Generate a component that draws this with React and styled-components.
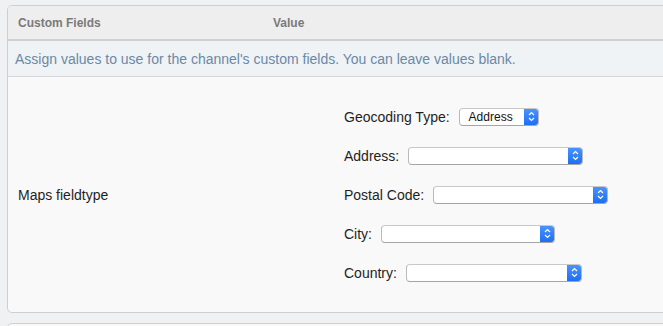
import React from 'react';
import styled, { createGlobalStyle } from 'styled-components';

const GlobalStyle = createGlobalStyle`
  body {
    margin: 0;
    background: #f0f1f2;
    font-family: "Liberation Sans", Arial, sans-serif;
    overflow: hidden;
  }
`;

const Page = styled.div`
  padding: 5px 0 0 7px;
  width: 700px;
`;

const Panel = styled.div`
  border: 1px solid #cfcfcf;
  border-radius: 5px;
  background: #f9f9f9;
  overflow: hidden;
  margin-bottom: 10px;
`;

const HeadRow = styled.div`
  display: grid;
  grid-template-columns: 255px 1fr;
  height: 33px;
  align-items: center;
  background: #eeeeee;
  border-bottom: 2px solid #d0d0d0;
  font-size: 12px;
  font-weight: bold;
  color: #7a7a7a;
`;

const HeadCell = styled.div`
  padding-left: 10px;
`;

const Notice = styled.div`
  height: 35px;
  display: flex;
  align-items: center;
  padding-left: 7px;
  background: #eff3f6;
  border-bottom: 1px solid #d8d8d8;
  font-size: 14px;
  color: #6c88a5;
`;

const Body = styled.div`
  display: grid;
  grid-template-columns: 255px 1fr;
  align-items: center;
  padding: 20px 0;
`;

const FieldName = styled.div`
  padding-left: 10px;
  font-size: 14px;
  color: #1f1f1f;
`;

const Form = styled.div`
  padding-left: 81px;
  display: flex;
  flex-direction: column;
`;

const Row = styled.div`
  height: 39px;
  display: flex;
  align-items: center;
  font-size: 14px;
  color: #1f1f1f;
`;

const Label = styled.span`
  margin-right: 9px;
`;

const Select = styled.div`
  width: ${p => p.w}px;
  height: 16px;
  display: flex;
  align-items: center;
  border: 1px solid #b9b9b9;
  border-top-color: #c8c8c8;
  border-bottom-color: #a5a5a5;
  border-radius: 4px;
  background: #fff;
  overflow: hidden;
  font-size: 12px;
  color: #111;
`;

const Text = styled.span`
  flex: 1;
  padding-left: 9px;
`;

const Stepper = styled.div`
  width: 15px;
  height: 18px;
  margin: -1px -1px -1px 0;
  display: flex;
  align-items: center;
  justify-content: center;
  background: linear-gradient(#4c95fb, #1a6cf4);
  border-radius: 0 4px 4px 0;
`;

const NextPanel = styled.div`
  height: 20px;
  border: 1px solid #cfcfcf;
  border-radius: 5px 5px 0 0;
  background: #f9f9f9;
`;

const Arrows = () => (
  <svg width="7" height="11" viewBox="0 0 7 11">
    <path d="M1 4 L3.5 1.5 L6 4 M1 7 L3.5 9.5 L6 7" fill="none" stroke="#fff" strokeWidth="1.2" />
  </svg>
);

const Dropdown = ({ w, value }) => (
  <Select w={w}>
    <Text>{value}</Text>
    <Stepper><Arrows /></Stepper>
  </Select>
);

const fields = [
  { label: 'Geocoding Type:', w: 78, value: 'Address' },
  { label: 'Address:', w: 173 },
  { label: 'Postal Code:', w: 173 },
  { label: 'City:', w: 172 },
  { label: 'Country:', w: 174 },
];

export default function App() {
  return (
    <>
      <GlobalStyle />
      <Page>
        <Panel>
          <HeadRow>
            <HeadCell>Custom Fields</HeadCell>
            <HeadCell>Value</HeadCell>
          </HeadRow>
          <Notice>Assign values to use for the channel's custom fields. You can leave values blank.</Notice>
          <Body>
            <FieldName>Maps fieldtype</FieldName>
            <Form>
              {fields.map(f => (
                <Row key={f.label}>
                  <Label>{f.label}</Label>
                  <Dropdown w={f.w} value={f.value} />
                </Row>
              ))}
            </Form>
          </Body>
        </Panel>
        <NextPanel />
      </Page>
    </>
  );
}
